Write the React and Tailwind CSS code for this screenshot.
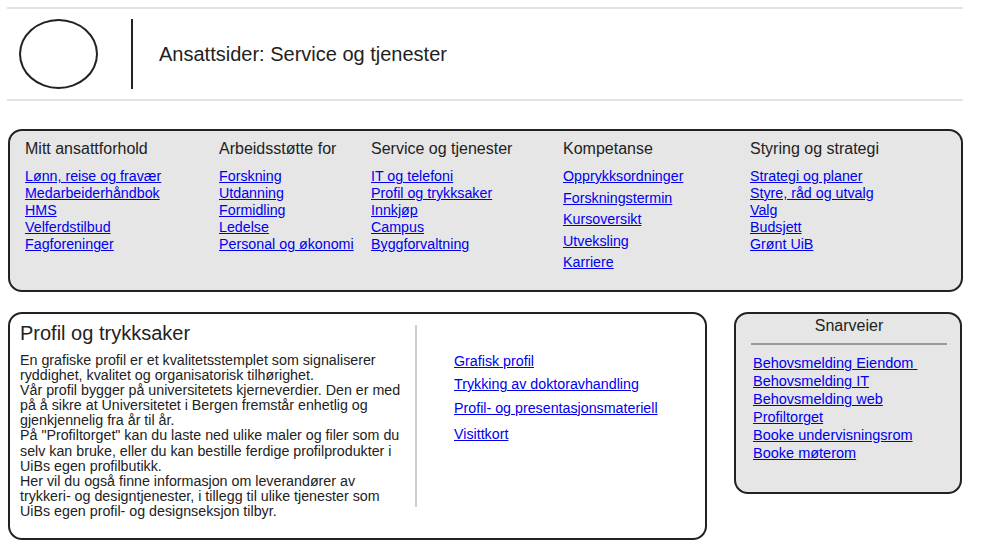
export default function App() {
  const font = { fontFamily: '"Liberation Sans", Arial, sans-serif' };

  const columns = [
    {
      title: 'Mitt ansattforhold',
      width: 'w-[194px]',
      links: ['Lønn, reise og fravær', 'Medarbeiderhåndbok', 'HMS', 'Velferdstilbud', 'Fagforeninger'],
    },
    {
      title: 'Arbeidsstøtte for',
      width: 'w-[152px]',
      links: ['Forskning', 'Utdanning', 'Formidling', 'Ledelse', 'Personal og økonomi'],
    },
    {
      title: 'Service og tjenester',
      width: 'w-[192px]',
      links: ['IT og telefoni', 'Profil og trykksaker', 'Innkjøp', 'Campus', 'Byggforvaltning'],
    },
    {
      title: 'Kompetanse',
      width: 'w-[187px]',
      spaced: true,
      links: ['Opprykksordninger', 'Forskningstermin', 'Kursoversikt', 'Utveksling', 'Karriere'],
    },
    {
      title: 'Styring og strategi',
      width: 'w-[180px]',
      links: ['Strategi og planer', 'Styre, råd og utvalg', 'Valg', 'Budsjett', 'Grønt UiB'],
    },
  ];

  const shortcuts = [
    'Behovsmelding Eiendom ',
    'Behovsmelding IT',
    'Behovsmelding web',
    'Profiltorget',
    'Booke undervisningsrom',
    'Booke møterom',
  ];

  return (
    <div className="w-[1000px] h-[541px] bg-white text-[#222] overflow-hidden" style={font}>
      <div className="ml-[7px] w-[956px] pt-[7px]">
        {/* Header */}
        <div className="border-t-2 border-b-2 border-[#e3e3e3] flex items-center h-[94px] pl-[12px]">
          <div className="w-[79px] h-[70px] rounded-[50%] border-2 border-[#222]" />
          <div className="ml-[33px] w-[2px] h-[70px] bg-[#222]" />
          <h1 className="ml-[26px] text-[20px] text-[#222]">Ansattsider: Service og tjenester</h1>
        </div>

        {/* Navigation */}
        <div className="mt-[28px] ml-[1px] w-[955px] h-[163px] rounded-[14px] border-2 border-[#222] bg-[#e6e6e6] flex pl-[15px] pt-[9px]">
          {columns.map((col) => (
            <div key={col.title} className={col.width}>
              <div className="text-[16px] leading-[18px] text-[#222]">{col.title}</div>
              <ul className={`mt-[10px] flex flex-col ${col.spaced ? 'gap-[4.5px]' : ''}`}>
                {col.links.map((l) => (
                  <li key={l} className="text-[14.25px] leading-[17px]">
                    <a href="#" className="text-[#0000ee] underline">{l}</a>
                  </li>
                ))}
              </ul>
            </div>
          ))}
        </div>

        {/* Content */}
        <div className="mt-[20px] flex gap-[27px] ml-[1px]">
          <div className="w-[699px] h-[228px] rounded-[14px] border-2 border-[#222] bg-white flex pl-[10px] pt-[8px]">
            <div className="w-[395px]">
              <h2 className="text-[20px] leading-[23px] text-[#222]">Profil og trykksaker</h2>
              <p className="mt-[8px] w-[386px] text-[14.25px] leading-[15.1px] text-[#222]">
                En grafiske profil er et kvalitetsstemplet som signaliserer ryddighet, kvalitet og organisatorisk tilhørighet.
                <br />
                Vår profil bygger på universitetets kjerneverdier. Den er med på å sikre at Universitetet i Bergen fremstår enhetlig og gjenkjennelig fra år til år.
                <br />
                På "Profiltorget" kan du laste ned ulike maler og filer som du selv kan bruke, eller du kan bestille ferdige profilprodukter i UiBs egen profilbutikk.
                <br />
                Her vil du også finne informasjon om leverandører av trykkeri- og designtjenester, i tillegg til ulike tjenester som UiBs egen profil- og designseksjon tilbyr.
              </p>
            </div>
            <div className="mt-[3px] w-[2px] h-[182px] bg-[#cccccc]" />
            <div className="ml-[37px] pt-[31px] text-[14.25px] leading-[17px]">
              <a href="#" className="block text-[#0000ee] underline">Grafisk profil</a>
              <a href="#" className="block mt-[6px] text-[#0000ee] underline">Trykking av doktoravhandling</a>
              <a href="#" className="block mt-[7px] text-[#0000ee] underline">Profil- og presentasjonsmateriell</a>
              <a href="#" className="block mt-[9px] text-[#0000ee] underline">Visittkort</a>
            </div>
          </div>

          <div className="w-[228px] h-[182px] rounded-[14px] border-2 border-[#222] bg-[#e6e6e6] pl-[15px] pr-[13px] pt-[3px]">
            <div className="text-center text-[16px] leading-[18px] text-[#222]">Snarveier</div>
            <div className="mt-[8px] h-[2px] bg-[#999999]" />
            <ul className="mt-[9px] pl-[2px] flex flex-col">
              {shortcuts.map((s) => (
                <li key={s} className="text-[14.5px] leading-[18px]">
                  <a href="#" className="text-[#0000ee] underline whitespace-pre">{s}</a>
                </li>
              ))}
            </ul>
          </div>
        </div>
      </div>
    </div>
  );
}
